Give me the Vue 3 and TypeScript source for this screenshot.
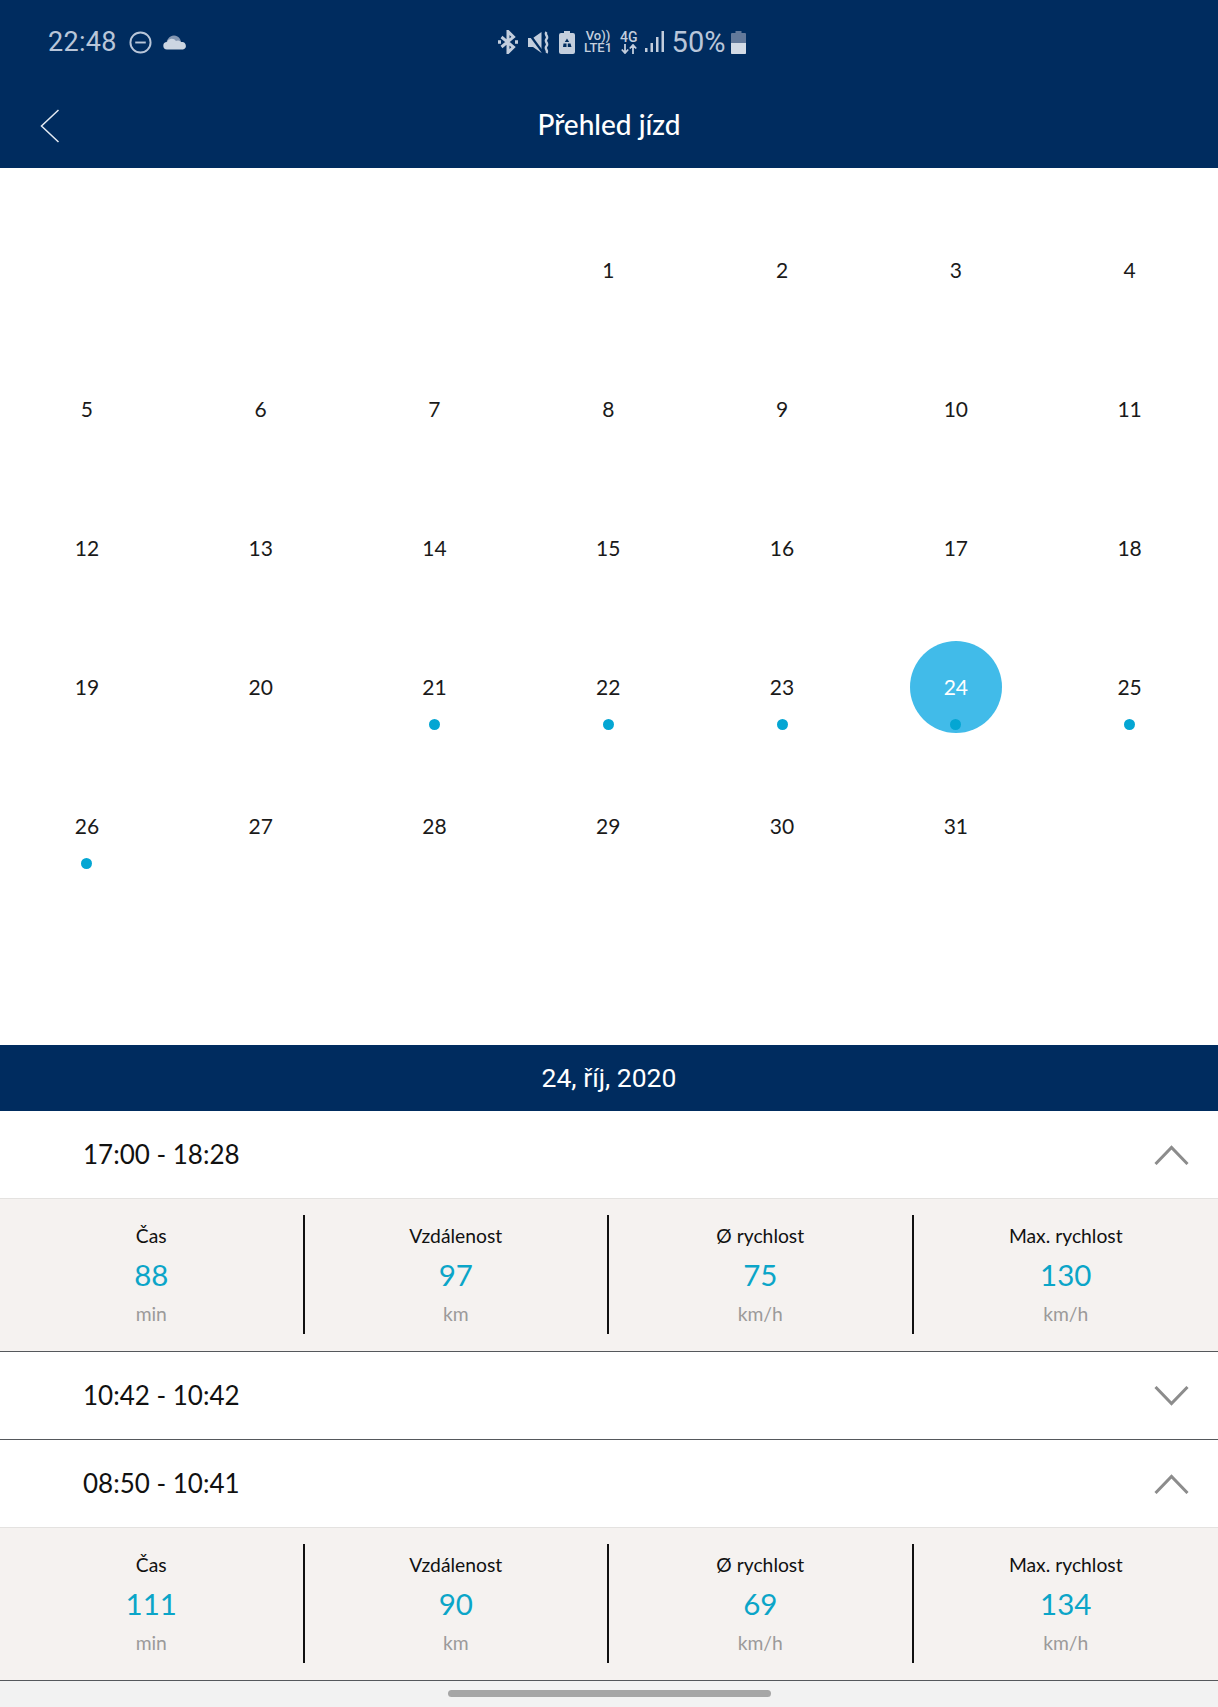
<script setup lang="ts">
interface Stat { label: string; value: string; unit: string }
interface Trip { time: string; open: boolean; stats: Stat[] }

const days: (number | null)[] = [null, null, null, ...Array.from({ length: 31 }, (_, i) => i + 1)]
const withDot = [21, 22, 23, 24, 25, 26]

const mk = (a: string, b: string, c: string, d: string): Stat[] => [
  { label: 'Čas', value: a, unit: 'min' },
  { label: 'Vzdálenost', value: b, unit: 'km' },
  { label: 'Ø rychlost', value: c, unit: 'km/h' },
  { label: 'Max. rychlost', value: d, unit: 'km/h' },
]

const trips: Trip[] = [
  { time: '17:00 - 18:28', open: true, stats: mk('88', '97', '75', '130') },
  { time: '10:42 - 10:42', open: false, stats: [] },
  { time: '08:50 - 10:41', open: true, stats: mk('111', '90', '69', '134') },
]
</script>

<template>
  <div class="page">
    <header class="head">
      <div class="status">
        <div class="status-left">
          <span class="clock">22:48</span>
          <svg class="ic" width="23" height="23" viewBox="0 0 24 24" fill="none" stroke="#b9c6d9" stroke-width="2">
            <circle cx="12" cy="12" r="10.500" />
            <path d="M6.500 12h11" />
          </svg>
          <svg class="cloud" width="24" height="16" viewBox="0 0 24 16">
            <path d="M5 12a5 5 0 0 1 0-7A7 7 0 0 1 17 5l2 5z" fill="#8497b2" />
            <path d="M4 15.500a3.700 3.700 0 0 1 0-7.400 5 5 0 0 1 9-1 4 4 0 0 1 5 1 3.800 3.800 0 0 1 2 7.400z" fill="#ccd6e2" />
          </svg>
        </div>
        <div class="status-right">
          <svg width="20" height="24" viewBox="0 0 20 24" fill="none" stroke="#c3cedd" stroke-width="3">
            <path d="M3.500 7l12 10-5.500 5.500V1.500L15.500 7l-12 10" />
            <path d="M0 12h3M17 12h3" stroke-width="3.500" />
          </svg>
          <svg width="21" height="23" viewBox="0 0 21 23">
            <path d="M0 7h5L13.500 1v21L5 16H0z" fill="#c3cedd" />
            <path d="M0.500 2l14 19" stroke="#002c5f" stroke-width="2.200" />
            <path d="M18.500 1c-2.500 3 2.500 4 0 7s2.500 4 0 7 2 4 0 7" fill="none" stroke="#c3cedd" stroke-width="2.400" />
          </svg>
          <svg width="16" height="23" viewBox="0 0 16 23">
            <path d="M5 0h6v2h3a2 2 0 0 1 2 2v17a2 2 0 0 1-2 2H2a2 2 0 0 1-2-2V4a2 2 0 0 1 2-2h3z" fill="#c3cedd" />
            <path d="M8 7.500l2.200 3.500H5.800zM4.500 12.500h3v3.500H4zM11.500 12.500l1 3.500H8.800v-3.500z" fill="#002c5f" />
          </svg>
          <span class="net volte"><b>Vo))</b><b>LTE1</b></span>
          <span class="net four">
            <b>4G</b>
            <svg width="16" height="10" viewBox="0 0 16 10" fill="none" stroke="#c3cedd" stroke-width="1.800">
              <path d="M4 0v9M0.800 5.500L4 9l3.200-3.500M12 10V1M8.800 4.500L12 1l3.200 3.500" />
            </svg>
          </span>
          <svg width="19" height="22" viewBox="0 0 19 22" fill="#c3cedd">
            <rect x="0" y="17" width="2.500" height="4" />
            <rect x="5.500" y="12" width="2.500" height="9" />
            <rect x="11" y="6" width="2.500" height="15" />
            <rect x="16.500" y="0" width="2.500" height="21" />
          </svg>
          <span class="pct">50%</span>
          <svg width="15" height="23" viewBox="0 0 15 23">
            <path d="M4.500 0h6v2H14a1 1 0 0 1 1 1v19a1 1 0 0 1-1 1H1a1 1 0 0 1-1-1V3a1 1 0 0 1 1-1h3.500z" fill="#63799a" />
            <path d="M0 12h15v10a1 1 0 0 1-1 1H1a1 1 0 0 1-1-1z" fill="#d3dbe6" />
          </svg>
        </div>
      </div>
      <div class="toolbar">
        <svg class="back" width="20" height="34" viewBox="0 0 20 34" fill="none" stroke="#e4ebf3" stroke-width="1.500">
          <path d="M18.500 1L1.500 17l17 16" />
        </svg>
        <h1 class="title">Přehled jízd</h1>
      </div>
    </header>

    <section class="calendar">
      <div v-for="(d, i) in days" :key="i" class="cell">
        <template v-if="d !== null">
          <span class="num" :class="{ sel: d === 24 }">{{ d }}</span>
          <span v-if="withDot.includes(d)" class="dot" />
        </template>
      </div>
    </section>

    <div class="date">24, říj, 2020</div>

    <section v-for="t in trips" :key="t.time" class="trip" :class="{ open: t.open }">
      <div class="row">
        <span class="time">{{ t.time }}</span>
        <svg class="chev" width="35" height="20" viewBox="0 0 35 20" fill="none" stroke="#8c8c8c" stroke-width="3">
          <path :d="t.open ? 'M1.500 19L17.500 2.500 33.500 19' : 'M1.500 1L17.500 17.500 33.500 1'" />
        </svg>
      </div>
      <div v-if="t.open" class="stats">
        <div v-for="s in t.stats" :key="s.label" class="stat">
          <span class="label">{{ s.label }}</span>
          <span class="value">{{ s.value }}</span>
          <span class="unit">{{ s.unit }}</span>
        </div>
      </div>
    </section>

    <footer class="navbar"><span class="pill" /></footer>
  </div>
</template>

<style>
html, body { margin: 0; background: #fff; }
</style>

<style scoped>
.page {
  width: 1218px;
  height: 1707px;
  display: flex;
  flex-direction: column;
  overflow: hidden;
  font-family: "Lato", "Noto Sans", sans-serif;
  color: #111;
  background: #fff;
}
.head { height: 168px; background: #002c5f; flex: none; }
.status { height: 84px; display: flex; align-items: center; padding-left: 48px; }
.status-left { width: 450px; display: flex; align-items: center; gap: 10px; }
.clock { font: 400 27px "Roboto", sans-serif; color: #b9c6d9; letter-spacing: 0.3px; margin-right: 2px; }
.cloud { margin-left: 1px; }
.status-right { display: flex; align-items: center; gap: 10px; }
.net { display: flex; flex-direction: column; align-items: center; font-family: "Roboto", sans-serif; color: #c3cedd; line-height: 12px; font-size: 13px; }
.net b { font-weight: 500; }
.four { gap: 1px; margin-right: -3px; }
.four b { font-size: 14px; }
.volte { margin: 0 -2px 0 -1px; }
.pct { font: 400 29px "Roboto", sans-serif; color: #b9c6d9; margin-left: -2px; margin-right: -4px; }
.toolbar { height: 84px; display: grid; grid-template-columns: 1fr auto 1fr; align-items: center; }
.back { margin-left: 40px; }
.title { margin: -4px 0 0; font-size: 28px; font-weight: 500; color: #fff; }

.calendar {
  height: 877px;
  flex: none;
  box-sizing: border-box;
  padding: 33px 1.500px 0 0;
  display: grid;
  grid-template-columns: repeat(7, 1fr);
  grid-auto-rows: 139px;
}
.cell { display: flex; flex-direction: column; align-items: center; padding-top: 23px; }
.num {
  width: 92px;
  height: 92px;
  box-sizing: border-box;
  padding-bottom: 2px;
  flex: none;
  display: flex;
  align-items: center;
  justify-content: center;
  border-radius: 50%;
  font-size: 21px;
  color: #1a1a1a;
}
.num.sel { background: #41bbe9; color: #fff; }
.dot {
  width: 11px;
  height: 11px;
  flex: none;
  margin-top: -14px;
  border-radius: 50%;
  background: #04a6d3;
  position: relative;
}

.date {
  height: 66px;
  box-sizing: border-box;
  padding-bottom: 2px;
  flex: none;
  display: flex;
  align-items: center;
  justify-content: center;
  background: #002c5f;
  color: #fff;
  font: 400 26.500px "Roboto", sans-serif;
}
.trip { flex: none; border-bottom: 1px solid #55585c; }
.row {
  height: 87px;
  box-sizing: border-box;
  display: flex;
  align-items: center;
  justify-content: space-between;
  padding: 0 29px 0 83px;
}
.time { font-size: 26px; margin-top: -1px; }
.stats {
  height: 153px;
  box-sizing: border-box;
  padding: 16px 0 17px;
  display: grid;
  grid-template-columns: repeat(4, 1fr);
  background: #f5f2f0;
  border-top: 1px solid #e4e2e0;
}
.stat {
  display: flex;
  flex-direction: column;
  align-items: center;
  border-right: 2px solid #111;
  padding-top: 9px;
}
.stat:last-child { border-right: 0; }
.label { font-size: 19.300px; line-height: 24px; }
.value { font-size: 29.500px; line-height: 36px; margin-top: 9px; color: #0ba5c8; }
.unit { font-size: 19.300px; line-height: 24px; margin-top: 9px; color: #9b9a9a; }
.navbar {
  flex: 1;
  display: flex;
  justify-content: center;
  padding-top: 9px;
  background: #f2f2f2;
}
.pill { width: 323px; height: 7px; border-radius: 4px; background: #a6a6a6; }
</style>
